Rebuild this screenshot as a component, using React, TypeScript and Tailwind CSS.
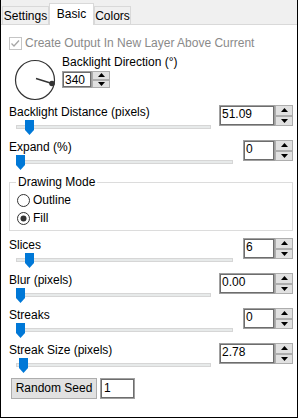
import React from 'react';

type SliderRow = {
  label: string;
  value: string;
  wide: boolean;
  thumb: number;
};

const topRows: SliderRow[] = [
  { label: 'Backlight Distance (pixels)', value: '51.09', wide: true, thumb: 9 },
  { label: 'Expand (%)', value: '0', wide: false, thumb: 0 },
];

const bottomRows: SliderRow[] = [
  { label: 'Slices', value: '6', wide: false, thumb: 9 },
  { label: 'Blur (pixels)', value: '0.00', wide: true, thumb: 0 },
  { label: 'Streaks', value: '0', wide: false, thumb: 0 },
  { label: 'Streak Size (pixels)', value: '2.78', wide: true, thumb: 3 },
];

const SpinButton: React.FC<{ up?: boolean }> = ({ up }) => (
  <div className="flex flex-1 items-center justify-center border border-[#adadad] bg-[#e1e1e1]">
    <svg width="7" height="4" viewBox="0 0 7 4">
      <path d={up ? 'M0 4 L3.5 0 L7 4 Z' : 'M0 0 L3.5 4 L7 0 Z'} fill="#000" />
    </svg>
  </div>
);

const SpinBox: React.FC<{ value: string; className: string }> = ({ value, className }) => (
  <div className={`flex ${className}`}>
    <div className="flex-1 border border-[#a0a0a0] bg-white">
      <div className="h-full border border-[#6d6d6d] pl-[1px] text-[12px] leading-[15px] text-black">
        {value}
      </div>
    </div>
    <div className="flex w-[18px] flex-col">
      <SpinButton up />
      <SpinButton />
    </div>
  </div>
);

const Thumb: React.FC<{ left: number }> = ({ left }) => (
  <svg className="absolute top-0" style={{ left }} width="9" height="15" viewBox="0 0 9 15">
    <path d="M0 0 H9 V10 L4.5 15 L0 10 Z" fill="#0078d7" />
  </svg>
);

const Slider: React.FC<{ row: SliderRow }> = ({ row }) => (
  <div className="flex h-[35px] items-start pl-[8px] pr-[4px]">
    <div className="flex flex-1 flex-col">
      <span className="h-[14px] leading-[14px]">{row.label}</span>
      <div className={`relative ml-[7px] mt-[1px] h-[15px] ${row.wide ? 'w-[195px]' : 'w-[217px]'}`}>
        <div className="mt-[5px] h-[4px] border border-[#d6d6d6] bg-[#e7eaea]" />
        <Thumb left={row.thumb} />
      </div>
    </div>
    <SpinBox
      value={row.value}
      className={row.wide ? 'h-[21px] w-[74px]' : 'h-[21px] w-[50px]'}
    />
  </div>
);

const Radio: React.FC<{ label: string; checked?: boolean }> = ({ label, checked }) => (
  <div className="flex h-[14px] items-center gap-[3px]">
    <svg width="13" height="13" viewBox="0 0 13 13">
      <circle cx="6.5" cy="6.5" r="6" fill="#fff" stroke="#333" />
      {checked && <circle cx="6.5" cy="6.5" r="3" fill="#333" />}
    </svg>
    <span>{label}</span>
  </div>
);

export default function App() {
  return (
    <div className="flex h-[418px] w-[298px] flex-col border-x border-b border-black bg-white font-['Liberation_Sans',Arial,sans-serif] text-[12px] text-black">
      {/* Tab strip */}
      <div className="flex h-[25px] items-end border-b border-[#d9d9d9] bg-[#f0f0f0] pl-[1px]">
        <div className="flex h-[18px] w-[47px] items-center justify-center border-x border-t border-[#d9d9d9] pt-[1px]">
          Settings
        </div>
        <div className="-mb-[1px] flex h-[22px] w-[45px] items-center justify-center border-x border-t border-[#d9d9d9] bg-white pb-[1px]">
          Basic
        </div>
        <div className="flex h-[18px] w-[37px] items-center justify-center border-x border-t border-[#d9d9d9] pt-[1px]">
          Colors
        </div>
      </div>

      {/* Disabled checkbox */}
      <div className="ml-[8px] mt-[11px] flex h-[14px] items-center gap-[3px] text-[#8a8a8a]">
        <svg width="13" height="13" viewBox="0 0 13 13">
          <rect x="0.5" y="0.5" width="12" height="12" fill="#fff" stroke="#c5c5c5" />
          <path d="M2.5 6.5 L5 9 L10 3.5" fill="none" stroke="#a6a6a6" strokeWidth="1.3" />
        </svg>
        <span>Create Output In New Layer Above Current</span>
      </div>

      {/* Direction dial */}
      <div className="mt-[5px] flex h-[50px] items-start">
        <svg className="ml-[12px] mt-[3px]" width="44" height="44" viewBox="0 0 44 44">
          <circle cx="22" cy="22" r="19.5" fill="none" stroke="#333" strokeWidth="1.2" />
          <line x1="23" y1="20.5" x2="39" y2="25.5" stroke="#333" strokeWidth="1.4" />
          <circle cx="39" cy="25.5" r="2.8" fill="#333" />
        </svg>
        <div className="ml-[5px] flex flex-col">
          <span className="h-[14px] leading-[14px]">Backlight Direction (°)</span>
          <SpinBox value="340" className="mt-[2px] h-[17px] w-[48px]" />
        </div>
      </div>

      {topRows.map((row) => (
        <Slider key={row.label} row={row} />
      ))}

      {/* Drawing mode group */}
      <fieldset className="ml-[8px] mr-[4px] h-[56px] border border-[#dcdcdc] pb-[5px]">
        <legend className="ml-[6px] px-[2px] leading-[14px]">Drawing Mode</legend>
        <div className="ml-[7px] mt-[4px] flex flex-col gap-[4px]">
          <Radio label="Outline" />
          <Radio label="Fill" checked />
        </div>
      </fieldset>

      <div className="mt-[7px] flex flex-col">
        {bottomRows.map((row) => (
          <Slider key={row.label} row={row} />
        ))}
      </div>

      {/* Random seed */}
      <div className="ml-[10px] flex h-[21px] gap-[3px]">
        <button className="w-[86px] border border-[#adadad] bg-[#e1e1e1] text-[12px] leading-[19px]">
          Random Seed
        </button>
        <div className="w-[35px] border border-[#a0a0a0] bg-white">
          <div className="h-full border border-[#6d6d6d] pl-[2px] text-[12px] leading-[17px]">1</div>
        </div>
      </div>
    </div>
  );
}
